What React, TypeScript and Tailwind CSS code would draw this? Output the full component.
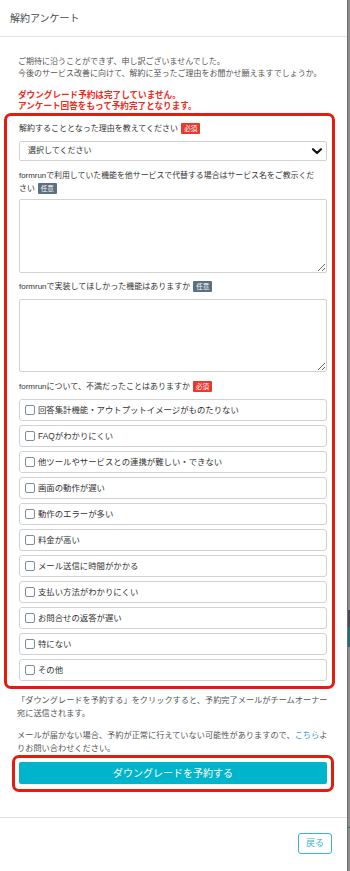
import React from "react";

const FONT = "font-['Liberation_Sans','Noto_Sans_CJK_JP',sans-serif]";

function Badge({ kind }: { kind: "req" | "opt" }) {
  return (
    <span
      className={
        kind === "req"
          ? "ml-[3px] inline-block h-[11px] rounded-[1px] bg-[#e8392f] px-[3px] align-middle text-[6.5px] leading-[11px] text-white"
          : "ml-[3px] inline-block h-[11px] rounded-[1px] bg-[#5b7080] px-[3px] align-middle text-[6.5px] leading-[11px] text-white"
      }
    >
      {kind === "req" ? "必須" : "任意"}
    </span>
  );
}

const options = [
  "回答集計機能・アウトプットイメージがものたりない",
  "FAQがわかりにくい",
  "他ツールやサービスとの連携が難しい・できない",
  "画面の動作が遅い",
  "動作のエラーが多い",
  "料金が高い",
  "メール送信に時間がかかる",
  "支払い方法がわかりにくい",
  "お問合せの返答が遅い",
  "特にない",
  "その他",
];

export default function App() {
  return (
    <div className={`${FONT} flex min-h-[871px] w-[350px] bg-white`}>
      <div className="flex w-[347px] flex-col bg-white">
        {/* header */}
        <div className="flex h-[37px] items-center border-b border-[#e2e2e2] px-[10px] text-[10px] text-[#4a4a4a]">
          解約アンケート
        </div>

        {/* body */}
        <div className="flex flex-col pb-[25px] pt-[19px]">
          <p className="px-[18px] text-[8px] leading-[12px] text-[#555]">
            ご期待に沿うことができず、申し訳ございませんでした。
            <br />
            今後のサービス改善に向けて、解約に至ったご理由をお聞かせ願えますでしょうか。
          </p>
          <p className="mt-[10px] px-[18px] text-[8.6px] font-bold leading-[11px] text-[#ee2a1c]">
            ダウングレード予約は完了していません。
            <br />
            アンケート回答をもって予約完了となります。
          </p>

          {/* red annotated form */}
          <div className="ml-[4px] mt-[1px] w-[331px] rounded-[7px] border-[3px] border-[#e51b10] pb-[5px] pl-[12px] pr-[5px] pt-[7px]">
            <p className="text-[8px] leading-[12px] text-[#333]">
              解約することとなった理由を教えてください
              <Badge kind="req" />
            </p>
            <div className="mt-[6px] flex h-[20px] items-center justify-between rounded-[2px] border border-[#d2d2d2] bg-white pl-[8px] pr-[3px] text-[8px] text-[#333]">
              <span>選択してください</span>
              <svg width="12" height="12" viewBox="0 0 12 12">
                <path d="M2 4.2 L6 8 L10 4.2" fill="none" stroke="#111" strokeWidth="2.2" strokeLinecap="round" strokeLinejoin="round" />
              </svg>
            </div>

            <p className="mt-[7.5px] text-[7.9px] leading-[13px] text-[#333]">
              formrunで利用していた機能を他サービスで代替する場合はサービス名をご教示くだ
              <br />
              さい
              <Badge kind="opt" />
            </p>
            <textarea className="mt-[4.5px] block h-[74px] w-full rounded-[2px] border border-[#d2d2d2] bg-white outline-none" />

            <p className="mt-[8px] text-[8px] leading-[12px] text-[#333]">
              formrunで実装してほしかった機能はありますか
              <Badge kind="opt" />
            </p>
            <textarea className="mt-[6px] block h-[73px] w-full rounded-[2px] border border-[#d2d2d2] bg-white outline-none" />

            <p className="mt-[9px] text-[8px] leading-[12px] text-[#333]">
              formrunについて、不満だったことはありますか
              <Badge kind="req" />
            </p>
            <div className="mt-[6px] flex flex-col gap-[4px]">
              {options.map((o) => (
                <label
                  key={o}
                  className="flex h-[22px] items-center rounded-[3px] border border-[#d2d2d2] bg-white text-[8.4px] text-[#333]"
                >
                  <span className="ml-[5px] mr-[3px] inline-block h-[10px] w-[10px] rounded-[2px] border border-[#7b8c9b] bg-white" />
                  <span>{o}</span>
                </label>
              ))}
            </div>
          </div>

          <p className="mt-[4.5px] px-[17px] text-[8.2px] leading-[13px] text-[#555]">
            「ダウングレードを予約する」をクリックすると、予約完了メールがチームオーナー
            <br />
            宛に送信されます。
          </p>
          <p className="mt-[9px] px-[17px] text-[8.2px] leading-[13px] text-[#555]">
            メールが届かない場合、予約が正常に行えていない可能性がありますので、
            <span className="text-[#3aa0d2]">こちら</span>よ
            <br />
            りお問い合わせください。
          </p>

          <div className="ml-[12px] mt-[0.5px] w-[322px] rounded-[7px] border-[3px] border-[#e51b10] p-[4px] pb-[5px]">
            <button className="flex h-[22px] w-full items-center justify-center rounded-[2px] bg-[#00b4cc] text-[10px] text-white">
              ダウングレードを予約する
            </button>
          </div>
        </div>

        {/* footer */}
        <div className="flex flex-1 flex-col items-end border-t border-[#e2e2e2] pr-[15px] pt-[15px]">
          <button className="flex h-[21px] w-[34px] items-center justify-center rounded-[3px] border border-[#3db2cf] bg-white text-[9px] text-[#3db2cf]">
            戻る
          </button>
        </div>
      </div>

      {/* backdrop strip */}
      <div className="flex flex-1 flex-col border-l border-[#6e6e6e] bg-[#8d8d8d]">
        <div className="h-[610px]" />
        <div className="h-[17px] bg-[#4b4658]" />
        <div className="h-[20px] bg-[#17707a]" />
        <div className="h-[180px]" />
        <div className="h-[1px] bg-[#17707a]" />
      </div>
    </div>
  );
}
